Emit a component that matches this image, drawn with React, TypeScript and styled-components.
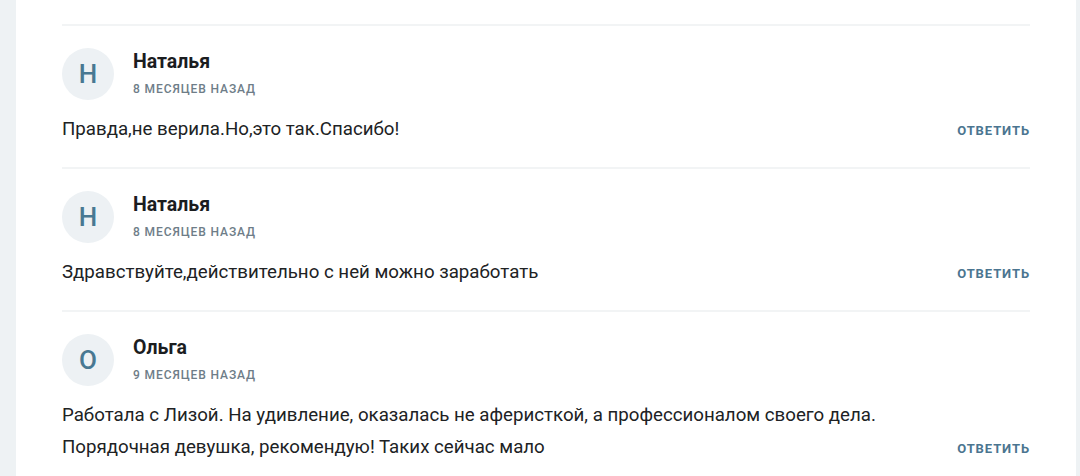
import React, { FC } from 'react';
import styled, { createGlobalStyle } from 'styled-components';

const GlobalStyle = createGlobalStyle`
  html, body {
    margin: 0;
    padding: 0;
    background: #eef2f4;
    font-family: Roboto, "Noto Sans", Arial, sans-serif;
  }
`;

const Page = styled.div`
  height: 476px;
  overflow: hidden;
  padding: 0 4px 0 16px;
`;

const Card = styled.div`
  background: #fff;
  height: 100%;
  padding: 24px 46px 0;
  box-sizing: border-box;
`;

const Item = styled.div`
  border-top: 2px solid #f2f4f5;
  padding: 22px 0 22px;
`;

const Header = styled.div`
  display: flex;
  align-items: flex-start;
  gap: 19px;
`;

const Avatar = styled.div`
  width: 52px;
  height: 52px;
  border-radius: 50%;
  background: #edf1f4;
  color: #487892;
  display: flex;
  align-items: center;
  justify-content: center;
  font-size: 26px;
  font-weight: 500;
  flex: none;
`;

const Meta = styled.div`
  display: flex;
  flex-direction: column;
  padding-top: 2px;
`;

const Name = styled.div`
  font-size: 19.5px;
  font-weight: 700;
  line-height: 24px;
  color: #1b1d1f;
`;

const Date = styled.div`
  margin-top: 7px;
  font-size: 12px;
  font-weight: 500;
  line-height: 16px;
  letter-spacing: 0.9px;
  color: #6e7d88;
  text-transform: uppercase;
`;

const Body = styled.div`
  display: flex;
  align-items: flex-end;
  justify-content: space-between;
  margin-top: 13px;
  gap: 40px;
`;

const Text = styled.div`
  font-size: 18.7px;
  line-height: 32px;
  color: #202224;
`;

const Reply = styled.button`
  border: 0;
  background: none;
  padding: 0;
  margin-bottom: -2px;
  font-family: inherit;
  font-size: 13px;
  font-weight: 700;
  line-height: 32px;
  letter-spacing: 0.9px;
  color: #4b7590;
  text-transform: uppercase;
  cursor: pointer;
  flex: none;
`;

interface CommentProps {
  name: string;
  date: string;
  lines: string[];
}

const Comment: FC<CommentProps> = ({ name, date, lines }) => (
  <Item>
    <Header>
      <Avatar>{name[0]}</Avatar>
      <Meta>
        <Name>{name}</Name>
        <Date>{date}</Date>
      </Meta>
    </Header>
    <Body>
      <Text>
        {lines.map((l) => <div key={l}>{l}</div>)}
      </Text>
      <Reply>Ответить</Reply>
    </Body>
  </Item>
);

const COMMENTS: CommentProps[] = [
  { name: 'Наталья', date: '8 месяцев назад', lines: ['Правда,не верила.Но,это так.Спасибо!'] },
  { name: 'Наталья', date: '8 месяцев назад', lines: ['Здравствуйте,действительно с ней можно заработать'] },
  {
    name: 'Ольга',
    date: '9 месяцев назад',
    lines: [
      'Работала с Лизой. На удивление, оказалась не аферисткой, а профессионалом своего дела.',
      'Порядочная девушка, рекомендую! Таких сейчас мало',
    ],
  },
];

const App: FC = () => (
  <>
    <GlobalStyle />
    <Page>
      <Card>
        {COMMENTS.map((c, i) => <Comment key={i} {...c} />)}
      </Card>
    </Page>
  </>
);

export default App;
